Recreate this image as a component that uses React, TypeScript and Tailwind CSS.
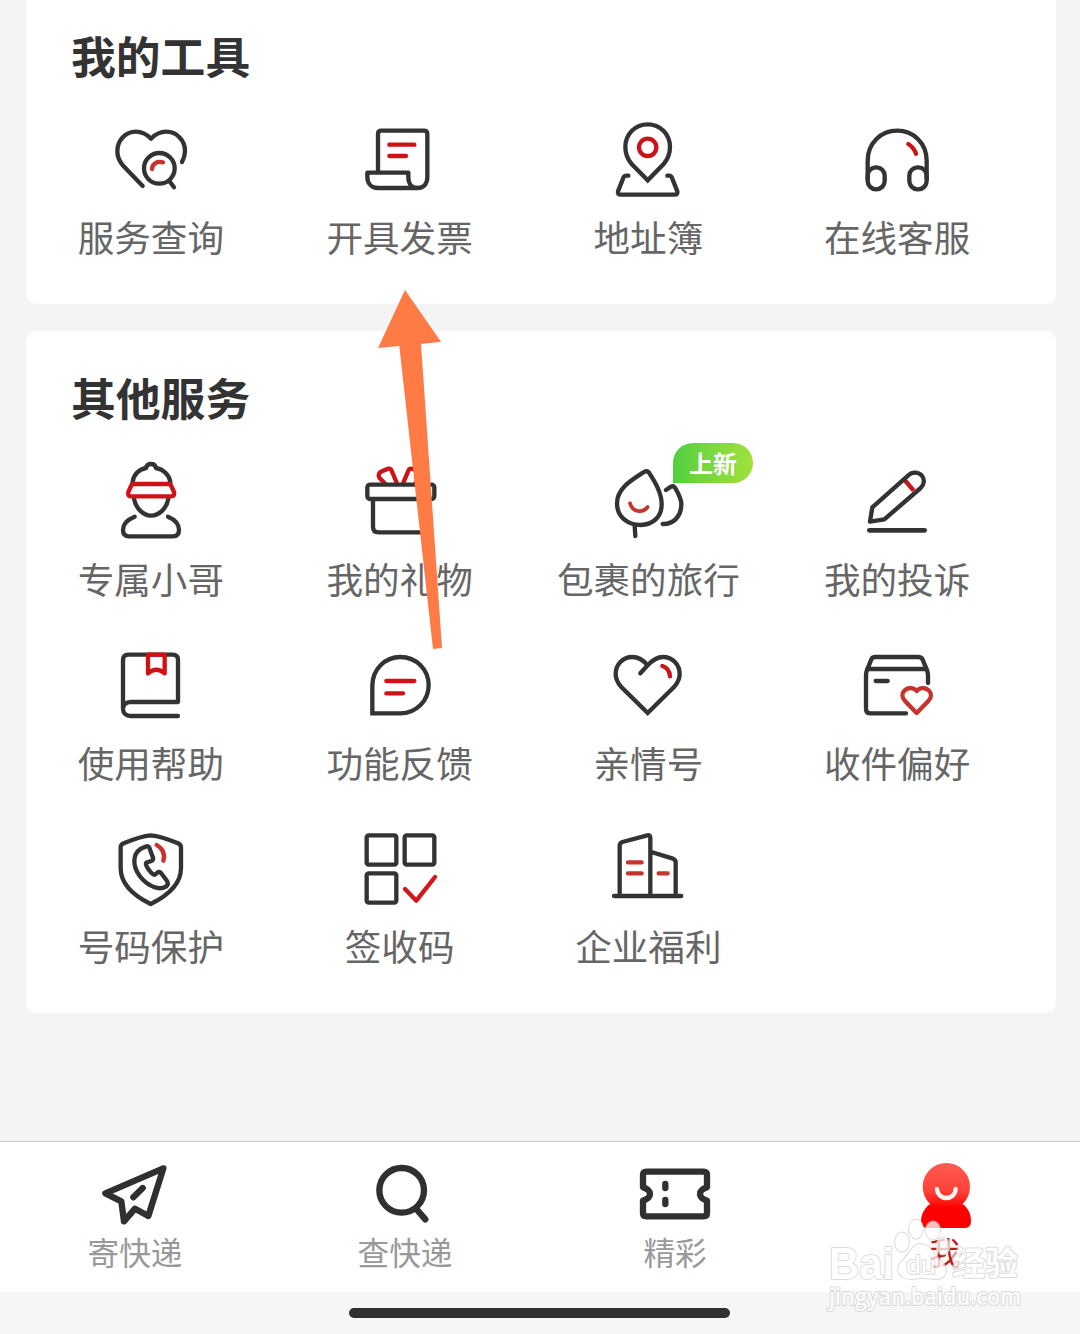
import type { ReactNode } from 'react'

// ── Types ─────────────────────────────────────────────────────────────────────
interface Tool {
  label: string
  icon:  ReactNode
  badge?: string
}

// ── Icon helpers ──────────────────────────────────────────────────────────────
const RED = '#cc1418'
const SOFT_RED = '#c8342d'

// Service icons are drawn on a 288×270 board, shown at a third of the size
function Icon({ children }: { children: ReactNode }) {
  return (
    <svg
      viewBox="0 0 288 270"
      className="block w-24 h-[90px]"
      fill="none"
      stroke="#333333"
      strokeWidth={13}
      strokeLinecap="round"
      strokeLinejoin="round"
    >
      {children}
    </svg>
  )
}

function NavIcon({ children }: { children: ReactNode }) {
  return (
    <svg
      viewBox="0 0 288 240"
      className="block w-24 h-20"
      fill="none"
      stroke="#303030"
      strokeWidth={19}
      strokeLinecap="round"
      strokeLinejoin="round"
    >
      {children}
    </svg>
  )
}

// ── Data ──────────────────────────────────────────────────────────────────────
const myTools: Tool[] = [
  {
    label: '服务查询',
    icon: (
      <Icon>
        <path d="M119 216L62 157C50 144 43 132 43 112C43 80 66 53 99 53C118 53 130 60 144 74C158 60 170 53 189 53C222 53 246 80 246 110C246 123 242 135 237 144" />
        <circle cx="169" cy="163" r="46" />
        <path d="M199 201L213 220" />
        <path d="M147 165C148 148 162 141 180 145" stroke={SOFT_RED} />
      </Icon>
    ),
  },
  {
    label: '开具发票',
    icon: (
      <Icon>
        <path d="M78 173V60Q78 50 88 50H216Q226 50 226 60V190C226 210 214 222 196 222H78C58 222 46 208 46 188V176H169V190C169 210 180 222 196 222" />
        <path d="M112 92H187M112 126H162" stroke={RED} />
      </Icon>
    ),
  },
  {
    label: '地址簿',
    icon: (
      <Icon>
        <path d="M143 199L95 150C83 136 76 118 76 99C76 60 106 31 143 31C180 31 210 60 210 99C210 118 203 136 191 150Z" strokeLinejoin="miter" />
        <circle cx="143" cy="100" r="26" stroke={RED} />
        <path d="M85 185H78Q73 185 71 189L54 232Q52 242 62 242H224Q234 242 232 232L215 189Q213 185 208 185H202" />
      </Icon>
    ),
  },
  {
    label: '在线客服',
    icon: (
      <Icon>
        <path d="M56 195V140C56 88 95 50 144.5 50C194 50 233 88 233 140V195" />
        <rect x="56" y="160" width="51" height="66" rx="25" />
        <rect x="181" y="160" width="52" height="66" rx="25" />
        <path d="M178 90C188 96 196 106 201 119" stroke={RED} />
      </Icon>
    ),
  },
]

const otherServices: Tool[] = [
  {
    label: '专属小哥',
    icon: (
      <Icon>
        <path d="M89 78C92 55 108 40 129 36C132 20 156 20 159 36C180 40 198 55 202 78" />
        <path d="M93 128C98 158 122 179 144 179C168 179 191 158 196 128" />
        <path d="M95 182C75 190 60 204 60 222Q60 241 78 241H210Q228 241 228 222C228 204 214 190 195 182" />
        <path d="M87 84H202L213 108Q216 121 205 121H84Q73 121 76 108Z" stroke={RED} />
      </Icon>
    ),
  },
  {
    label: '我的礼物',
    icon: (
      <Icon>
        <path d="M134 80L118 42Q116 37 108 38L90 46Q76 52 82 65L98 82M154 80L170 42Q172 37 180 38L198 46Q212 52 206 65L190 82" stroke={RED} />
        <rect x="46" y="86" width="201" height="43" rx="8" />
        <path d="M63 132V212Q63 229 80 229H214Q231 229 231 212V132" />
      </Icon>
    ),
  },
  {
    label: '包裹的旅行',
    badge: '上新',
    icon: (
      <Icon>
        <path d="M132 48Q141 42 147 50C165 78 185 110 185 145C185 182 160 206 122 207C80 207 51 180 51 142C51 98 90 75 132 48Z" />
        <path d="M104 209L106 240" />
        <path d="M198 102L213 92Q220 88 225 95C235 112 244 128 244 144C244 182 220 205 188 204" />
        <path d="M90 142C98 170 128 172 143 153" stroke={SOFT_RED} strokeWidth={11} />
      </Icon>
    ),
  },
  {
    label: '我的投诉',
    icon: (
      <Icon>
        <path d="M167 72L194 104" stroke={RED} strokeLinecap="butt" />
        <path d="M63 197L70 154L178 58C190 46 208 48 218 58C228 70 226 86 215 96L106 190Z" />
        <path d="M61 223H227" strokeWidth={14} />
      </Icon>
    ),
  },
  {
    label: '使用帮助',
    icon: (
      <Icon>
        <path d="M60 208V61Q60 44 76 44H209Q225 44 225 60V186H83C68 186 60 196 60 207C60 220 70 228 83 228H225" />
        <path d="M135 44H185V100Q160 78 135 100Z" stroke="#d01012" />
      </Icon>
    ),
  },
  {
    label: '功能反馈',
    icon: (
      <Icon>
        <path d="M61 220V137C61 88 99 51 145 51C193 51 230 89 230 135C230 182 193 220 145 220Z" strokeLinejoin="miter" />
        <path d="M103 123H187M103 160H153" stroke={RED} />
      </Icon>
    ),
  },
  {
    label: '亲情号',
    icon: (
      <Icon>
        <path d="M143 76C130 60 116 51 97 51C68 51 47 74 47 102C47 120 54 130 64 141L143 219L222 141C232 130 239 120 239 102C239 74 218 51 189 51C170 51 156 62 143 76L121 100" strokeLinejoin="miter" />
        <path d="M187 78C199 82 209 93 210 109" stroke={RED} />
      </Icon>
    ),
  },
  {
    label: '收件偏好',
    icon: (
      <Icon>
        <path d="M55 88L67 58Q70 51 78 51H206Q218 51 221 59L232 86M57 87H230" />
        <path d="M55 88Q51 96 51 104V206Q51 220 65 220H171M232 86Q237 96 237 104V129M80 123H116" />
        <path d="M203 219L168 183C158 173 158 160 167 151C178 141 194 142 203 153C212 142 228 141 239 151C248 160 248 173 238 183Z" stroke={SOFT_RED} />
      </Icon>
    ),
  },
  {
    label: '号码保护',
    icon: (
      <Icon>
        <path d="M143 37C116 39 88 50 62 61Q53 65 53 73V135C53 190 100 222 143 243C186 222 234 190 234 135V73Q234 65 225 61C199 50 170 39 143 37Z" />
        <path d="M128 71Q136 67 139 74L150 104Q152 111 145 114L130 119C126 122 132 134 142 146C150 154 152 158 157 154L163 149Q168 145 174 150L190 171Q199 182 190 190C180 196 168 198 155 193C120 180 92 145 94 110C95 92 106 78 128 71Z" />
        <path d="M161 66C178 76 187 92 181 113" stroke={SOFT_RED} />
      </Icon>
    ),
  },
  {
    label: '签收码',
    icon: (
      <Icon>
        <rect x="44" y="37" width="89" height="88" rx="6" />
        <rect x="158" y="37" width="89" height="88" rx="6" />
        <rect x="44" y="151" width="89" height="88" rx="6" />
        <path d="M159 198L193 233L249 162" stroke="#d5161a" />
      </Icon>
    ),
  },
  {
    label: '企业福利',
    icon: (
      <Icon>
        <path d="M42 219H244M59 217V68Q59 60 67 57L142 37Q151 35 151 45V217M154 87L219 107Q227 110 227 118V217" />
        <path d="M84 118H125M84 151H125M176 151H203" stroke={SOFT_RED} />
      </Icon>
    ),
  },
]

const tabs = [
  {
    label: '寄快递',
    icon: (
      <NavIcon>
        <path d="M229 40L55 115L103 139L111 199L144 161L184 183Z" />
        <path d="M139 127L167 99" />
      </NavIcon>
    ),
  },
  {
    label: '查快递',
    icon: (
      <NavIcon>
        <circle cx="134" cy="106" r="67" />
        <path d="M179 163L205 193" />
      </NavIcon>
    ),
  },
  {
    label: '精彩',
    icon: (
      <NavIcon>
        <path d="M58 50H230Q240 50 240 60V97C226 102 219 108 219 117C219 126 226 132 240 137V174Q240 184 230 184H58Q48 184 48 174V137C62 132 69 126 69 117C69 108 62 102 48 97V60Q48 50 58 50Z" />
        <path d="M115 87V99M115 135V147" />
      </NavIcon>
    ),
  },
  {
    label: '我',
    active: true,
    icon: (
      <NavIcon>
        <defs>
          <linearGradient id="me-head" x1="0" y1="0" x2="0" y2="1">
            <stop offset="0" stopColor="#ff5b52" />
            <stop offset="0.6" stopColor="#ff4238" />
            <stop offset="0.95" stopColor="#fd0000" />
          </linearGradient>
        </defs>
        <path d="M98 148H198C214 160 222 180 222 198Q222 219 204 219H90Q72 219 72 198C72 180 82 160 98 148Z" fill="#fd0000" stroke="none" />
        <circle cx="148" cy="95" r="71" fill="url(#me-head)" stroke="none" />
        <path d="M120 102C122 138 174 138 176 102" stroke="#fff4f2" strokeWidth={13} />
      </NavIcon>
    ),
  },
]

// ── Sections ──────────────────────────────────────────────────────────────────
function ToolGrid({ items }: { items: Tool[] }) {
  return (
    <div className="mt-[29px] ml-[0.5px] grid w-[995px] grid-cols-4 gap-y-[33.5px]">
      {items.map(item => (
        <div key={item.label} className="relative flex h-[150px] flex-col items-center">
          {item.icon}
          <span className="mt-2.5 text-[36.6px] leading-[46px] whitespace-nowrap text-[#666666]">
            {item.label}
          </span>
          {item.badge && (
            <span className="absolute -top-[13px] left-[149px] h-10 w-20 rounded-[20px] rounded-bl-none bg-linear-to-r from-[#50d040] to-[#a0e03c] text-center text-[24px] leading-10 font-bold text-white">
              {item.badge}
            </span>
          )}
        </div>
      ))}
    </div>
  )
}

function SectionTitle({ children }: { children: ReactNode }) {
  return (
    <h2 className="ml-[45px] text-[44.8px] leading-[60px] font-bold text-[#333333]">{children}</h2>
  )
}

// Orange pointer towards 开具发票
function Pointer() {
  return (
    <svg className="pointer-events-none absolute top-[290px] left-[378px] h-[360px] w-16" viewBox="378 290 64 360">
      <path d="M405 290L441 341.7L421 344L442 648L433 649L399.3 346L378 348Z" fill="#ff7b45" />
    </svg>
  )
}

function Watermark() {
  return (
    <svg
      className="pointer-events-none absolute top-[1210px] left-[820px] h-[110px] w-[210px] opacity-75"
      viewBox="820 1210 210 110"
      fill="#ffffff"
      stroke="#cfcfcf"
      strokeWidth={2}
      strokeLinejoin="round"
      paintOrder="stroke"
      fontFamily="'Liberation Sans', 'Noto Sans CJK SC', sans-serif"
    >
      <ellipse cx="902" cy="1242" rx="7" ry="9.5" />
      <ellipse cx="916" cy="1229" rx="7" ry="9.5" />
      <ellipse cx="933" cy="1230.5" rx="7" ry="9" />
      <ellipse cx="943" cy="1246" rx="6.5" ry="8.5" />
      <path d="M920 1244C930 1244 934 1255 941 1261C949 1268 947 1279 936 1279C928 1279 925 1277 920 1278C914 1279 908 1280 903 1277C896 1273 897 1265 903 1260C909 1255 912 1244 920 1244Z" />
      <text x="829" y="1278.5" fontSize="44" fontWeight="700" textLength="65" lengthAdjust="spacingAndGlyphs">Bai</text>
      <text x="906" y="1274" fontSize="26" textLength="30" lengthAdjust="spacingAndGlyphs">du</text>
      <text x="952" y="1275" fontSize="33" fontWeight="700">经验</text>
      <text x="829" y="1304.5" fontSize="22.5" fontWeight="600" fontFamily="'Open Sans', sans-serif" textLength="192" lengthAdjust="spacingAndGlyphs">jingyan.baidu.com</text>
    </svg>
  )
}

// ── Page ──────────────────────────────────────────────────────────────────────
export default function App() {
  return (
    <div className="relative flex h-[1334px] w-[1080px] flex-col overflow-hidden bg-[#f4f4f4] font-['Noto_Sans_CJK_SC',sans-serif]">
      <main className="flex h-[1141px] shrink-0 flex-col gap-[27px] pr-6 pl-[26px]">
        <section className="rounded-b-[10px] bg-white pt-[25px] pb-10">
          <SectionTitle>我的工具</SectionTitle>
          <ToolGrid items={myTools} />
        </section>
        <section className="rounded-[10px] bg-white pt-9 pb-10">
          <SectionTitle>其他服务</SectionTitle>
          <ToolGrid items={otherServices} />
        </section>
      </main>

      <nav className="grid h-[151px] shrink-0 grid-cols-4 border-t border-[#c9cbcb] bg-white pt-[13px]">
        {tabs.map(tab => (
          <div key={tab.label} className="flex flex-col items-center">
            {tab.icon}
            <span
              className={[
                'text-[31.6px] leading-[33px]',
                tab.active ? 'text-[#c01a14]' : 'text-[#999999]',
              ].join(' ')}
            >
              {tab.label}
            </span>
          </div>
        ))}
      </nav>

      <div className="flex flex-1 bg-[#f6f6f6] pt-4 pl-[349px]">
        <div className="h-2.5 w-[381px] rounded-full bg-[#303030]" />
      </div>

      <Pointer />
      <Watermark />
    </div>
  )
}
